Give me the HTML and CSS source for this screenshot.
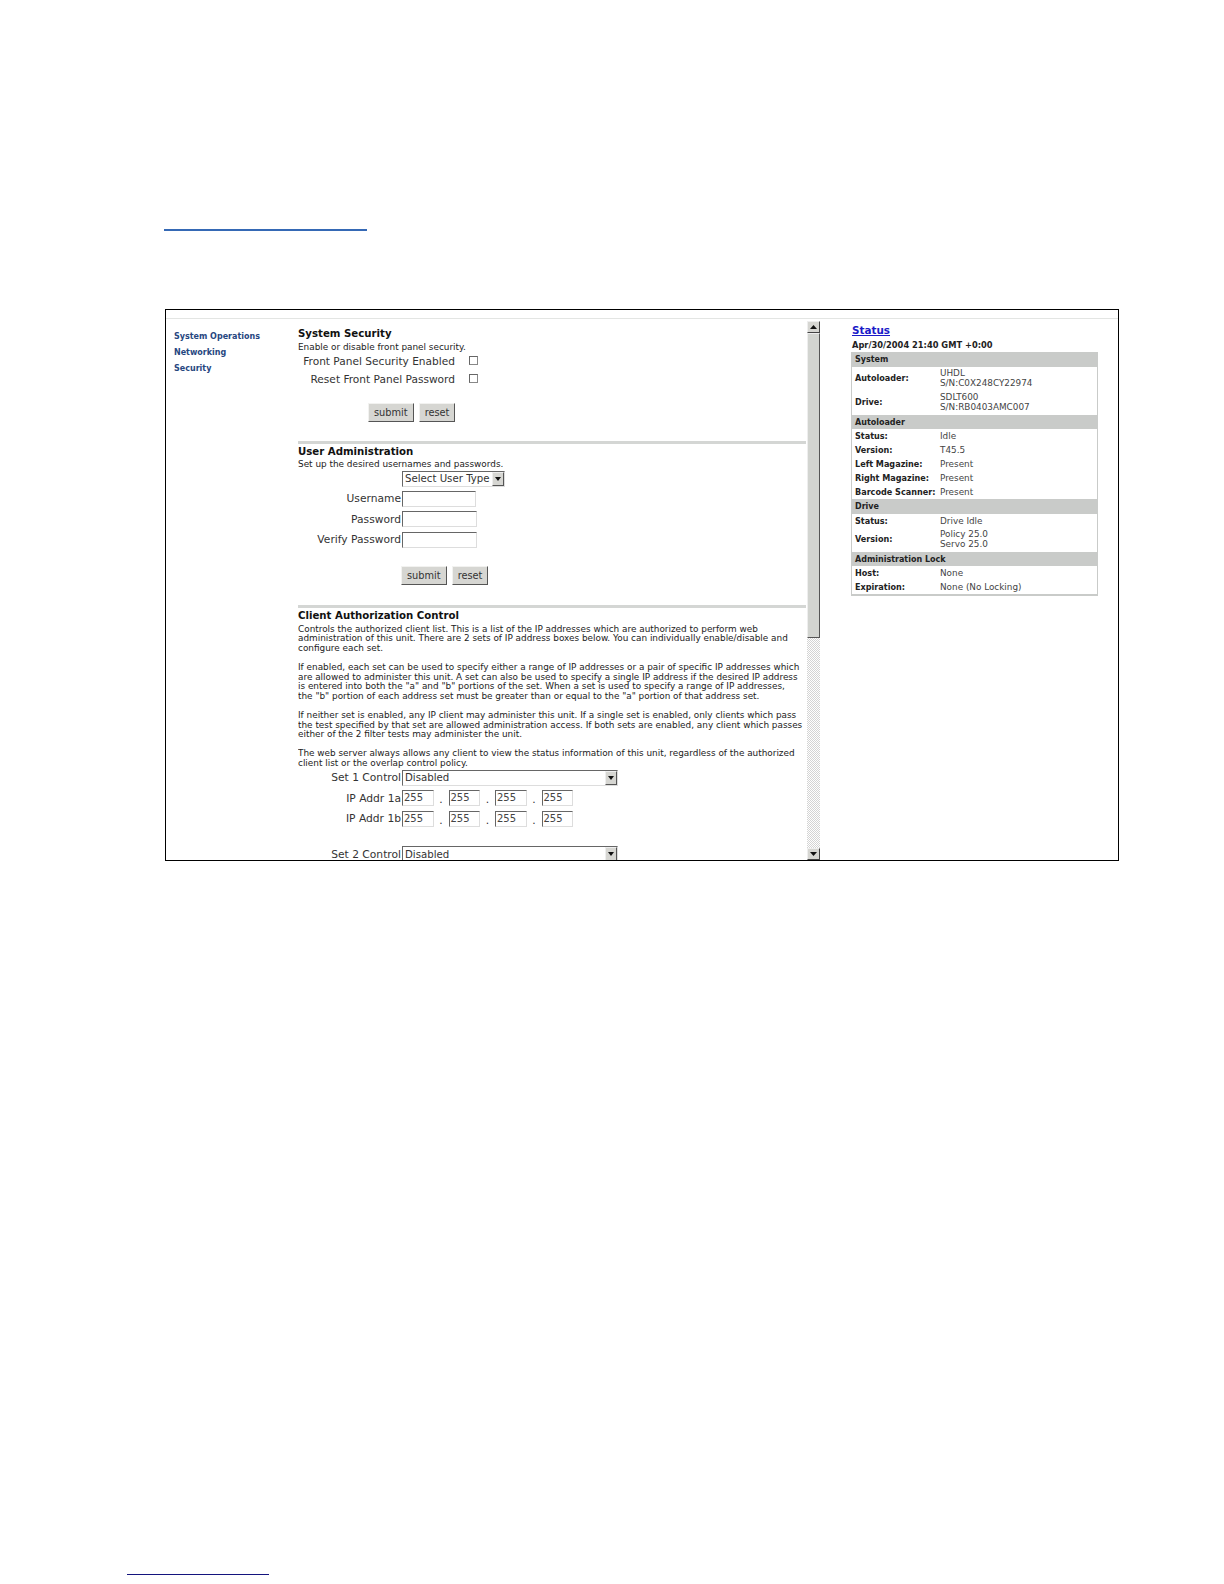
FILE: index.html
```html
<!DOCTYPE html>
<html lang="en">
<head>
<meta charset="utf-8">
<title>Security</title>
<link rel="stylesheet" href="styles.css">
</head>
<body>
<div class="page">
  <div class="head-rule"></div>
  <div class="shot">
    <div class="shot-top"></div>
    <div class="shot-body">
      <nav class="side">
        <a>System Operations</a>
        <a>Networking</a>
        <a>Security</a>
      </nav>
      <main class="main">
        <div class="content">
          <h2>System Security</h2>
          <p>Enable or disable front panel security.</p>
          <div class="chk-row"><label>Front Panel Security Enabled</label><span class="chk"></span></div>
          <div class="chk-row"><label>Reset Front Panel Password</label><span class="chk"></span></div>
          <div class="btns b1"><button>submit</button><button>reset</button></div>
          <hr>
          <h2>User Administration</h2>
          <p>Set up the desired usernames and passwords.</p>
          <div class="frow first"><label></label><span class="sel s-user">Select User Type<i class="drop"></i></span></div>
          <div class="frow"><label>Username</label><span class="inp w1"></span></div>
          <div class="frow"><label>Password</label><span class="inp w2"></span></div>
          <div class="frow"><label>Verify Password</label><span class="inp w2"></span></div>
          <div class="btns b2"><button>submit</button><button>reset</button></div>
          <hr>
          <h2>Client Authorization Control</h2>
          <p>Controls the authorized client list. This is a list of the IP addresses which are authorized to perform web<br>administration of this unit. There are 2 sets of IP address boxes below. You can individually enable/disable and<br>configure each set.</p>
          <p class="gap">If enabled, each set can be used to specify either a range of IP addresses or a pair of specific IP addresses which<br>are allowed to administer this unit. A set can also be used to specify a single IP address if the desired IP address<br>is entered into both the "a" and "b" portions of the set. When a set is used to specify a range of IP addresses,<br>the "b" portion of each address set must be greater than or equal to the "a" portion of that address set.</p>
          <p class="gap">If neither set is enabled, any IP client may administer this unit. If a single set is enabled, only clients which pass<br>the test specified by that set are allowed administration access. If both sets are enabled, any client which passes<br>either of the 2 filter tests may administer the unit.</p>
          <p class="gap">The web server always allows any client to view the status information of this unit, regardless of the authorized<br>client list or the overlap control policy.</p>
          <div class="frow set1"><label>Set 1 Control</label><span class="sel s-wide">Disabled<i class="drop"></i></span></div>
          <div class="frow ip"><label>IP Addr 1a</label><span class="inp o">255</span><b>.</b><span class="inp o">255</span><b>.</b><span class="inp o">255</span><b>.</b><span class="inp o">255</span></div>
          <div class="frow ip"><label>IP Addr 1b</label><span class="inp o">255</span><b>.</b><span class="inp o">255</span><b>.</b><span class="inp o">255</span><b>.</b><span class="inp o">255</span></div>
          <div class="frow set2"><label>Set 2 Control</label><span class="sel s-wide">Disabled<i class="drop"></i></span></div>
        </div>
        <div class="scrollbar">
          <span class="arrow"><svg viewBox="0 0 7 4" width="7" height="4"><path d="M3.5 0L7 4H0Z"/></svg></span>
          <span class="thumb"></span>
          <span class="track"></span>
          <span class="arrow"><svg viewBox="0 0 7 4" width="7" height="4"><path d="M0 0H7L3.5 4Z"/></svg></span>
        </div>
      </main>
      <aside class="status">
        <a class="status-title">Status</a>
        <div class="stamp">Apr/30/2004 21:40 GMT +0:00</div>
        <div class="box">
          <div class="bh">System</div>
          <div class="br two"><b>Autoloader:</b><span>UHDL<br>S/N:C0X248CY22974</span></div>
          <div class="br two"><b>Drive:</b><span>SDLT600<br>S/N:RB0403AMC007</span></div>
          <div class="bh">Autoloader</div>
          <div class="br"><b>Status:</b><span>Idle</span></div>
          <div class="br"><b>Version:</b><span>T45.5</span></div>
          <div class="br"><b>Left Magazine:</b><span>Present</span></div>
          <div class="br"><b>Right Magazine:</b><span>Present</span></div>
          <div class="br"><b>Barcode Scanner:</b><span>Present</span></div>
          <div class="bh">Drive</div>
          <div class="br"><b>Status:</b><span>Drive Idle</span></div>
          <div class="br two"><b>Version:</b><span>Policy 25.0<br>Servo 25.0</span></div>
          <div class="bh">Administration Lock</div>
          <div class="br"><b>Host:</b><span>None</span></div>
          <div class="br"><b>Expiration:</b><span>None (No Locking)</span></div>
        </div>
      </aside>
    </div>
  </div>
  <div class="foot-rule"></div>
</div>
</body>
</html>
```
FILE: styles.css
```css
* { box-sizing: border-box; }
html, body { margin: 0; padding: 0; background: #fff; }
body { font-family: "DejaVu Sans", Verdana, sans-serif; color: #222; }
.page { width: 1224px; height: 1584px; display: flex; flex-direction: column; padding-top: 229px; }
.head-rule { width: 203px; height: 2px; margin-left: 164px; background: #3569b5; }
.shot { width: 954px; height: 552px; margin: 78px 0 0 165px; border: 1px solid #000; display: flex; flex-direction: column; overflow: hidden; }
.shot-top { height: 9px; border-bottom: 1px solid #e3e5e3; flex: none; }
.shot-body { display: flex; flex: 1; min-height: 0; }
.side { width: 132px; flex: none; padding: 13px 0 0 8px; display: flex; flex-direction: column; gap: 7px; }
.side a { font-size: 8px; line-height: 9px; font-weight: 700; color: #27477f; }
.main { width: 522px; flex: none; display: flex; }
.content { width: 508px; flex: none; padding-top: 7px; overflow: hidden; }
h2 { margin: 0 0 1px; font-size: 10.2px; line-height: 15.5px; font-weight: 700; color: #111; }
p { margin: 0; font-size: 8.9px; line-height: 9.6px; color: #222; white-space: nowrap; }
p.gap { margin-top: 9.6px; }
.chk-row { display: flex; align-items: center; height: 18px; font-size: 10.6px; color: #333; white-space: nowrap; }
.chk-row label { width: 157px; text-align: right; flex: none; }
.chk { width: 9px; height: 9px; border: 1px solid #888; border-top-color: #666; border-left-color: #666; background: #fff; flex: none; margin: -2px 0 0 14px; }
.btns { display: flex; gap: 5px; }
.b1 { margin: 15px 0 18.5px 70px; }
.b2 { margin: 16px 0 20px 103px; }
button { font: 9.8px "DejaVu Sans", sans-serif; color: #333; height: 19px; padding: 0 5px; background: #d6d6d2; border: 1px solid; border-color: #f2f2f0 #555 #555 #f2f2f0; }
hr { margin: 0; height: 3px; border: 0; background: #d4d6d4; }
.frow { display: flex; align-items: center; height: 20.6px; font-size: 10.7px; color: #333; white-space: nowrap; }
.frow.first { height: 18.6px; }
.frow label { width: 104px; text-align: right; flex: none; padding-right: 1px; }
.sel { display: flex; align-items: center; justify-content: space-between; height: 16px; padding-left: 2px; border: 1px solid; border-color: #666 #ddd #ddd #666; background: #fff; font-size: 10.2px; color: #333; }
.s-user { width: 103px; }
.s-wide { width: 216px; }
.drop { width: 12px; height: 14px; background: #d6d6d2; border: 1px solid; border-color: #eee #555 #555 #eee; position: relative; flex: none; }
.drop::after { content: ""; position: absolute; left: 2px; top: 4px; border: 3px solid transparent; border-top: 4px solid #111; border-bottom: 0; }
.inp { display: block; height: 16px; border: 1px solid; border-color: #666 #ddd #ddd #666; background: #fff; font-size: 10px; line-height: 14px; padding-left: 1px; color: #444; flex: none; }
.w1 { width: 74px; }
.w2 { width: 75px; }
.o { width: 31.5px; }
.ip b { width: 15px; padding-top: 3px; text-align: center; font-weight: 400; flex: none; }
.frow.set1 { margin-top: -1px; }
.frow.set2 { margin-top: 16px; height: 18px; }
.scrollbar { width: 13px; margin: 2px 0 0 1px; flex: none; display: flex; flex-direction: column; }
.arrow { height: 12px; flex: none; display: flex; align-items: center; justify-content: center; background: #d6d6d2; border: 1px solid; border-color: #eee #444 #444 #eee; }
.arrow svg path { fill: #111; }
.thumb { height: 305px; flex: none; background: #d2d4d0; border: 1px solid; border-color: #eee #555 #555 #eee; }
.track { flex: 1; background: repeating-conic-gradient(#d4d4d4 0 25%, #fff 0 50%) 0 0 / 2px 2px; }
.status { flex: 1; padding: 4px 0 0 32px; }
.status-title { display: block; font-size: 10.4px; line-height: 14px; font-weight: 700; color: #1a1ac8; text-decoration: underline; }
.stamp { font-size: 8.3px; line-height: 12px; margin-top: 2px; font-weight: 700; color: #222; white-space: nowrap; }
.box { width: 247px; margin: 1px 0 0 -1px; border: 1px solid #c9cbc9; border-width: 0 1px 2px; background: #fff; }
.bh { height: 14.6px; line-height: 15.5px; padding-left: 3px; background: #c9cbc9; font-weight: 700; font-size: 8px; color: #222; }
.br { display: flex; align-items: center; min-height: 14px; padding-left: 3px; white-space: nowrap; font-size: 8.1px; }
.br.two { min-height: 24px; line-height: 9.6px; }
.br b { width: 85px; flex: none; color: #222; }
.br span { color: #444; font-size: 8.85px; }
.foot-rule { width: 142px; height: 1px; margin: 713px 0 0 127px; background: #14147e; }
```
